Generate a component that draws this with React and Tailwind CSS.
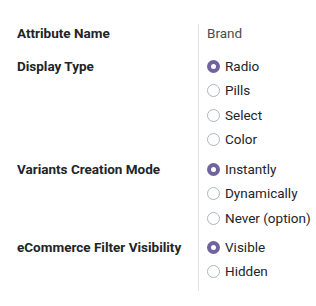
const groups = [
  { label: "Display Type", options: ["Radio", "Pills", "Select", "Color"], pb: "pb-[5px]" },
  { label: "Variants Creation Mode", options: ["Instantly", "Dynamically", "Never (option)"], pb: "pb-[4.5px]" },
  { label: "eCommerce Filter Visibility", options: ["Visible", "Hidden"], pb: "pb-[7px]" },
];

function Radio({ checked, label }) {
  return (
    <div className="flex items-center h-[24.5px]">
      {checked ? (
        <span className="w-[13px] h-[13px] rounded-full bg-[#71639e] flex items-center justify-center">
          <span className="w-[5px] h-[5px] rounded-full bg-white" />
        </span>
      ) : (
        <span className="w-[13px] h-[13px] rounded-full border border-[#adb5bd] bg-white" />
      )}
      <span className="ml-[5px] text-[#212529]">{label}</span>
    </div>
  );
}

export default function App() {
  return (
    <div className="w-[316px] h-[306px] bg-white pt-[24px] text-[13.5px] font-['Roboto',sans-serif]">
      <div className="grid grid-cols-[198px_1fr]">
        {/* attribute name */}
        <div className="pl-[17px] h-[18px] flex items-center font-bold text-[#212529]">Attribute Name</div>
        <div className="border-l border-[#dee2e6] pl-[8px] pb-[11.75px]">
          <div className="h-[18px] flex items-center text-[#4c4c4c]">Brand</div>
        </div>

        {groups.map((g) => (
          <div key={g.label} className="contents">
            <div className="pl-[17px] h-[24.5px] flex items-center font-bold text-[#212529]">{g.label}</div>
            <div className={`border-l border-[#dee2e6] pl-[8px] ${g.pb}`}>
              {g.options.map((o, i) => (
                <Radio key={o} label={o} checked={i === 0} />
              ))}
            </div>
          </div>
        ))}
      </div>
    </div>
  );
}
